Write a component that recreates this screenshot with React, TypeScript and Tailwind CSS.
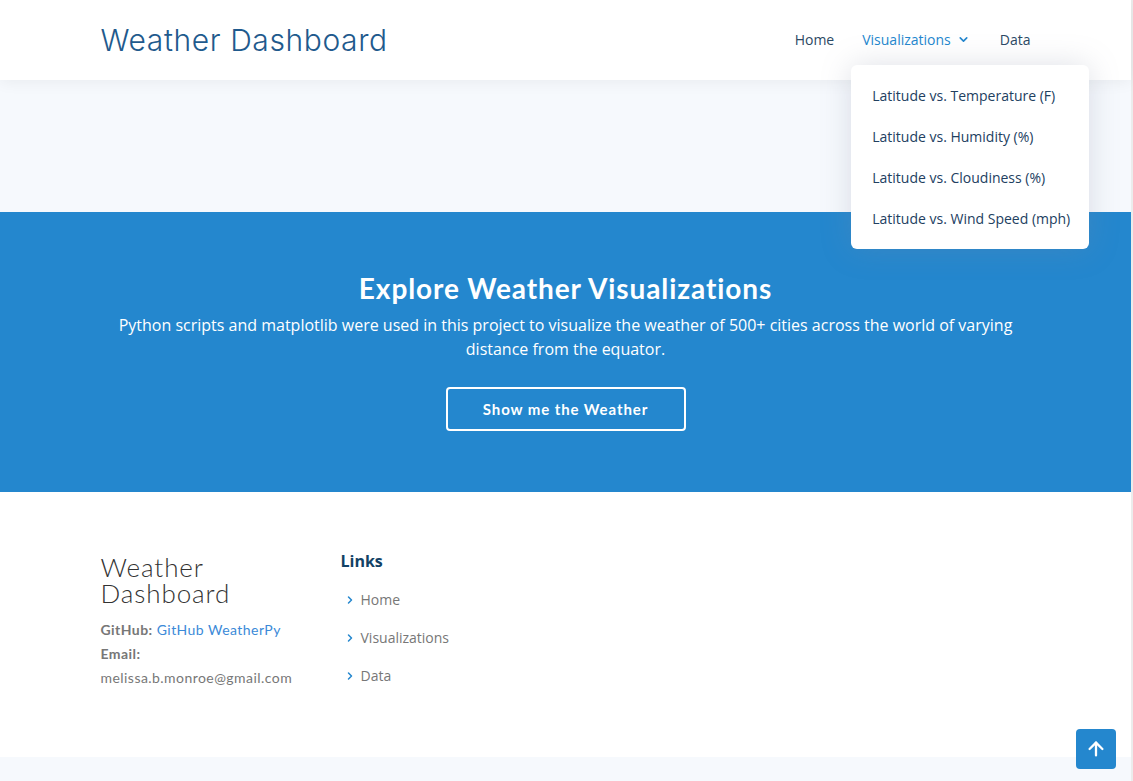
import { ArrowUp, ChevronDown, ChevronRight } from "lucide-react";

const vizLinks = [
	"Latitude vs. Temperature (F)",
	"Latitude vs. Humidity (%)",
	"Latitude vs. Cloudiness (%)",
	"Latitude vs. Wind Speed (mph)",
];

const footerLinks = ["Home", "Visualizations", "Data"];

function Header() {
	return (
		<header className="relative z-20 h-[80px] bg-white shadow-[0_2px_15px_rgba(0,0,0,0.06)]">
			<div className="mx-auto flex h-full max-w-[960px] items-center justify-between px-[15px]">
				<h1 className="font-['Inter'] text-[30px] font-light tracking-[0.6px] text-[#1f5a8d]">
					Weather Dashboard
				</h1>
				<nav className="mt-[-2px] flex items-center text-[14px] text-[#2c4964]">
					<a className="mr-[28px]">Home</a>
					<div className="relative mr-[30px]">
						<a className="flex items-center gap-[6px] text-[#2487ce]">
							Visualizations
							<ChevronDown size={13} strokeWidth={3} />
						</a>
						{/* открытое выпадающее меню */}
						<div className="absolute left-[-11px] top-[36px] w-[238px] rounded-[6px] bg-white py-[10px] shadow-[0_0_30px_rgba(127,137,161,0.25)]">
							{vizLinks.map(item => (
								<div
									key={item}
									className="flex h-[41px] items-center whitespace-nowrap px-[21px] text-[#22405f]"
								>
									{item}
								</div>
							))}
						</div>
					</div>
					<a>Data</a>
				</nav>
			</div>
		</header>
	);
}

function Hero() {
	return (
		<section className="bg-[#2487ce] pb-[61px] pt-[59px] text-center text-white">
			<div className="mx-auto max-w-[936px]">
				<h2 className="mb-[8px] font-['Lato'] text-[28px] font-bold leading-[34px] tracking-[0.9px]">
					Explore Weather Visualizations
				</h2>
				<p className="text-[16px] font-medium leading-[24px]">
					Python scripts and matplotlib were used in this project to visualize the weather of 500+ cities across the world of
					varying distance from the equator.
				</p>
				<button className="mt-[26px] h-[44px] w-[240px] rounded-[4px] border-2 border-white font-['Lato'] text-[15px] font-bold tracking-[0.9px]">
					Show me the Weather
				</button>
			</div>
		</section>
	);
}

function Footer() {
	return (
		<footer>
			<div className="bg-white pb-[62px] pt-[62px]">
				<div className="mx-auto flex max-w-[960px] px-[15px]">
					<div className="w-[240px]">
						<h3 className="font-['Lato'] text-[26px] font-light leading-[26px] tracking-[0.9px] text-[#333]">
							<span className="block">Weather</span>
							<span className="block">Dashboard</span>
						</h3>
						<div className="mt-[12px] font-['Lato'] text-[14px] leading-[24px] tracking-[0.45px] text-[#777]">
							<p>
								<b className="font-bold">GitHub:</b> <a className="text-[#3b8ad8]">GitHub WeatherPy</a>
							</p>
							<p>
								<b className="font-bold">Email:</b>
							</p>
							<p>melissa.b.monroe@gmail.com</p>
						</div>
					</div>
					<div className="mt-[-5px]">
						<h4 className="mb-[8px] text-[16px] font-bold leading-[24px] text-[#124265]">Links</h4>
						<ul>
							{footerLinks.map(link => (
								<li key={link} className="flex items-center py-[7px] text-[14px] leading-[24px] text-[#777]">
									<ChevronRight size={12} strokeWidth={3} className="ml-[3px] mr-[5px] text-[#2487ce]" />
									{link}
								</li>
							))}
						</ul>
					</div>
				</div>
			</div>
			<div className="h-[27px] bg-[#f6f9fd]" />
		</footer>
	);
}

export default function App() {
	return (
		<div className="min-h-[781px] border-r-2 border-[#ececec] bg-white font-['Open_Sans']">
			<Header />
			<div className="h-[132px] bg-[#f6f9fd]" />
			<Hero />
			<Footer />
			<a className="fixed bottom-[12px] right-[17px] flex h-10 w-10 items-center justify-center rounded-[4px] bg-[#2487ce] text-white">
				<ArrowUp size={22} strokeWidth={2.5} />
			</a>
		</div>
	);
}
